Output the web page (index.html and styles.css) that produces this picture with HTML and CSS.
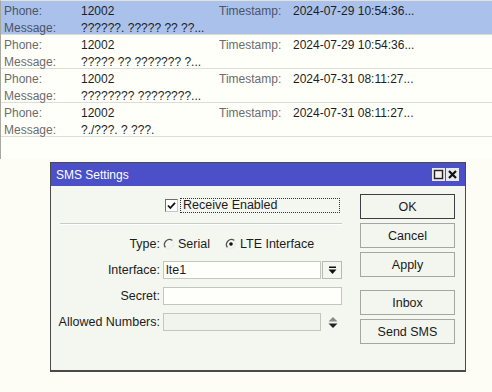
FILE: index.html
```html
<!DOCTYPE html>
<html>
<head>
<meta charset="utf-8">
<link rel="stylesheet" href="styles.css">
</head>
<body>
<div class="list">
  <div class="row sel">
    <span class="k">Phone:</span><span class="v">12002</span><span class="k">Timestamp:</span><span class="v">2024-07-29 10:54:36...</span>
    <span class="k">Message:</span><span class="v wide">??????. ????? ?? ??...</span>
  </div>
  <div class="row">
    <span class="k">Phone:</span><span class="v">12002</span><span class="k">Timestamp:</span><span class="v">2024-07-29 10:54:36...</span>
    <span class="k">Message:</span><span class="v wide">????? ?? ??????? ?...</span>
  </div>
  <div class="row">
    <span class="k">Phone:</span><span class="v">12002</span><span class="k">Timestamp:</span><span class="v">2024-07-31 08:11:27...</span>
    <span class="k">Message:</span><span class="v wide">???????? ????????...</span>
  </div>
  <div class="row">
    <span class="k">Phone:</span><span class="v">12002</span><span class="k">Timestamp:</span><span class="v">2024-07-31 08:11:27...</span>
    <span class="k">Message:</span><span class="v wide">?./???. ? ???.</span>
  </div>
</div>

<div class="dialog">
  <div class="titlebar">
    <span class="title">SMS Settings</span>
    <div class="tbtns">
      <span class="tb"><svg width="13" height="13" viewBox="0 0 13 13"><rect x="2.5" y="2.5" width="8" height="8" fill="#f7eef2" stroke="#222" stroke-width="1.4"/></svg></span>
      <span class="tb"><svg width="13" height="13" viewBox="0 0 13 13"><path d="M3 3 L10 10 M10 3 L3 10" stroke="#111" stroke-width="2.2"/></svg></span>
    </div>
  </div>
  <div class="dbody">
    <div class="form">
      <div class="frow checkrow">
        <span class="lbl"></span>
        <span class="cb"><svg width="13" height="13" viewBox="0 0 13 13"><path d="M3 6.5 L5.3 9 L10 3.8" fill="none" stroke="#111" stroke-width="1.8"/></svg></span>
        <span class="focus">Receive Enabled</span>
      </div>
      <div class="sep"></div>
      <div class="frow typerow">
        <span class="lbl">Type:</span>
        <span class="radio r1"><svg width="12" height="12" viewBox="0 0 12 12"><path d="M2.5 9.5 A5 5 0 0 1 9.5 2.5" fill="none" stroke="#555" stroke-width="1.3"/><path d="M9.5 2.5 A5 5 0 0 1 2.5 9.5" fill="none" stroke="#eeeee8" stroke-width="1.2"/></svg></span>
        <span class="rtext">Serial</span>
        <span class="radio r2"><svg width="12" height="12" viewBox="0 0 12 12"><path d="M2.5 9.5 A5 5 0 0 1 9.5 2.5" fill="none" stroke="#555" stroke-width="1.3"/><path d="M9.5 2.5 A5 5 0 0 1 2.5 9.5" fill="none" stroke="#eeeee8" stroke-width="1.2"/><circle cx="6" cy="6" r="1.8" fill="#111"/></svg></span>
        <span class="rtext">LTE Interface</span>
      </div>
      <div class="frow">
        <span class="lbl">Interface:</span>
        <span class="inp short">lte1</span>
        <span class="ddbtn"><svg width="9" height="9" viewBox="0 0 9 9"><rect x="1" y="0.5" width="7" height="1.5" fill="#111"/><path d="M0.5 3.5 H8.5 L4.5 8 Z" fill="#111"/></svg></span>
      </div>
      <div class="frow">
        <span class="lbl">Secret:</span>
        <span class="inp"></span>
      </div>
      <div class="frow">
        <span class="lbl">Allowed Numbers:</span>
        <span class="inp short dis"></span>
        <span class="spin"><svg width="10" height="13" viewBox="0 0 10 13"><path d="M0.5 5.5 L5 1 L9.5 5.5 Z" fill="#8a8a88"/><path d="M0.5 7.5 H9.5 L5 12 Z" fill="#222"/></svg></span>
      </div>
    </div>
    <div class="btns">
      <div class="btn def">OK</div>
      <div class="btn">Cancel</div>
      <div class="btn">Apply</div>
      <div class="btn gap">Inbox</div>
      <div class="btn">Send SMS</div>
    </div>
  </div>
</div>
</body>
</html>
```

FILE: styles.css
```css
html, body {
  margin: 0;
  padding: 0;
}
body {
  width: 492px;
  height: 392px;
  background: #fdfdf6;
  font-family: "Liberation Sans", Arial, sans-serif;
  font-size: 12px;
  color: #1c1c1c;
  position: relative;
  overflow: hidden;
}
.list {
  height: 158px;
  border-left: 1px solid #a8a8a2;
  border-top: 1px solid #e2e2da;
  background: #fffffa;
}
.row {
  height: 34px;
  box-sizing: border-box;
  padding: 1px 0 0 3px;
  border-bottom: 1px solid #deded6;
  display: grid;
  grid-template-columns: 77px 138px 74px auto;
  grid-auto-rows: 17px;
  align-items: center;
}
.row.sel {
  background: #a9c1eb;
}
.k {
  color: #6c6c6c;
}
.sel .k {
  color: #4c5468;
}
.v {
  color: #1e1e1e;
}
.wide {
  grid-column: 2 / 5;
}

.dialog {
  position: absolute;
  left: 50px;
  top: 162px;
  width: 416px;
  height: 210px;
  box-sizing: border-box;
  border: 1px solid #4a4a4a;
  border-bottom-width: 2px;
  background: #f4f6f0;
  font-size: 12.5px;
}
.titlebar {
  height: 23px;
  background: #4b50c9;
  color: #fff;
  font-size: 12px;
  display: flex;
  align-items: center;
  justify-content: space-between;
  padding: 0 6px 0 5px;
}
.tbtns {
  display: flex;
  gap: 1px;
}
.tb {
  width: 13px;
  height: 13px;
  background: #e9e9ef;
  display: flex;
}
.dbody {
  display: flex;
}
.form {
  width: 299px;
  padding: 11px 0 0 6px;
  box-sizing: border-box;
  display: flex;
  flex-direction: column;
}
.frow {
  display: flex;
  align-items: center;
  height: 18px;
  margin-top: 8px;
}
.lbl {
  width: 103px;
  flex: none;
  text-align: right;
  color: #1c1c1c;
  white-space: nowrap;
}
.checkrow {
  margin-top: 0;
  height: 16px;
}
.cb {
  margin-left: 5px;
  width: 13px;
  height: 13px;
  box-sizing: border-box;
  border: 1px solid #6e6e6e;
  border-right-color: #c8c8c2;
  border-bottom-color: #c8c8c2;
  background: #fff;
  display: flex;
  align-items: center;
  justify-content: center;
}
.cb svg {
  flex: none;
}
.focus {
  margin-left: 2px;
  width: 160px;
  height: 15px;
  box-sizing: border-box;
  border: 1px dotted #333;
  padding-left: 2px;
  line-height: 13px;
}
.sep {
  margin: 10px 0 0 3px;
  width: 282px;
  border-top: 1px solid #c9cbc4;
  border-bottom: 1px solid #ffffff;
}
.typerow {
  margin-top: 10px;
}
.radio {
  width: 12px;
  height: 12px;
  display: flex;
  flex: none;
}
.r1 {
  margin-left: 3px;
}
.r2 {
  margin-left: 15px;
}
.rtext {
  margin-left: 3px;
  white-space: nowrap;
}
.inp {
  margin-left: 3px;
  width: 179px;
  height: 18px;
  box-sizing: border-box;
  border: 1px solid #c4c6be;
  background: #fefefa;
  padding-left: 2px;
  line-height: 16px;
}
.inp.short {
  width: 158px;
}
.inp.dis {
  background: #f1f3ed;
}
.ddbtn {
  margin-left: 1px;
  width: 20px;
  height: 18px;
  box-sizing: border-box;
  border: 1px solid #b8bab2;
  display: flex;
  align-items: center;
  justify-content: center;
}
.spin {
  margin-left: 7px;
  display: flex;
}
.btns {
  padding-top: 8px;
  margin-left: 10px;
  display: flex;
  flex-direction: column;
  gap: 4px;
}
.btn {
  width: 95px;
  height: 25px;
  box-sizing: border-box;
  border: 1px solid #a4a6a0;
  background: #f3f5ef;
  display: flex;
  align-items: center;
  justify-content: center;
  color: #1a1a1a;
}
.btn.def {
  border-color: #3e3e3e;
}
.btn.gap {
  margin-top: 9px;
}
```
